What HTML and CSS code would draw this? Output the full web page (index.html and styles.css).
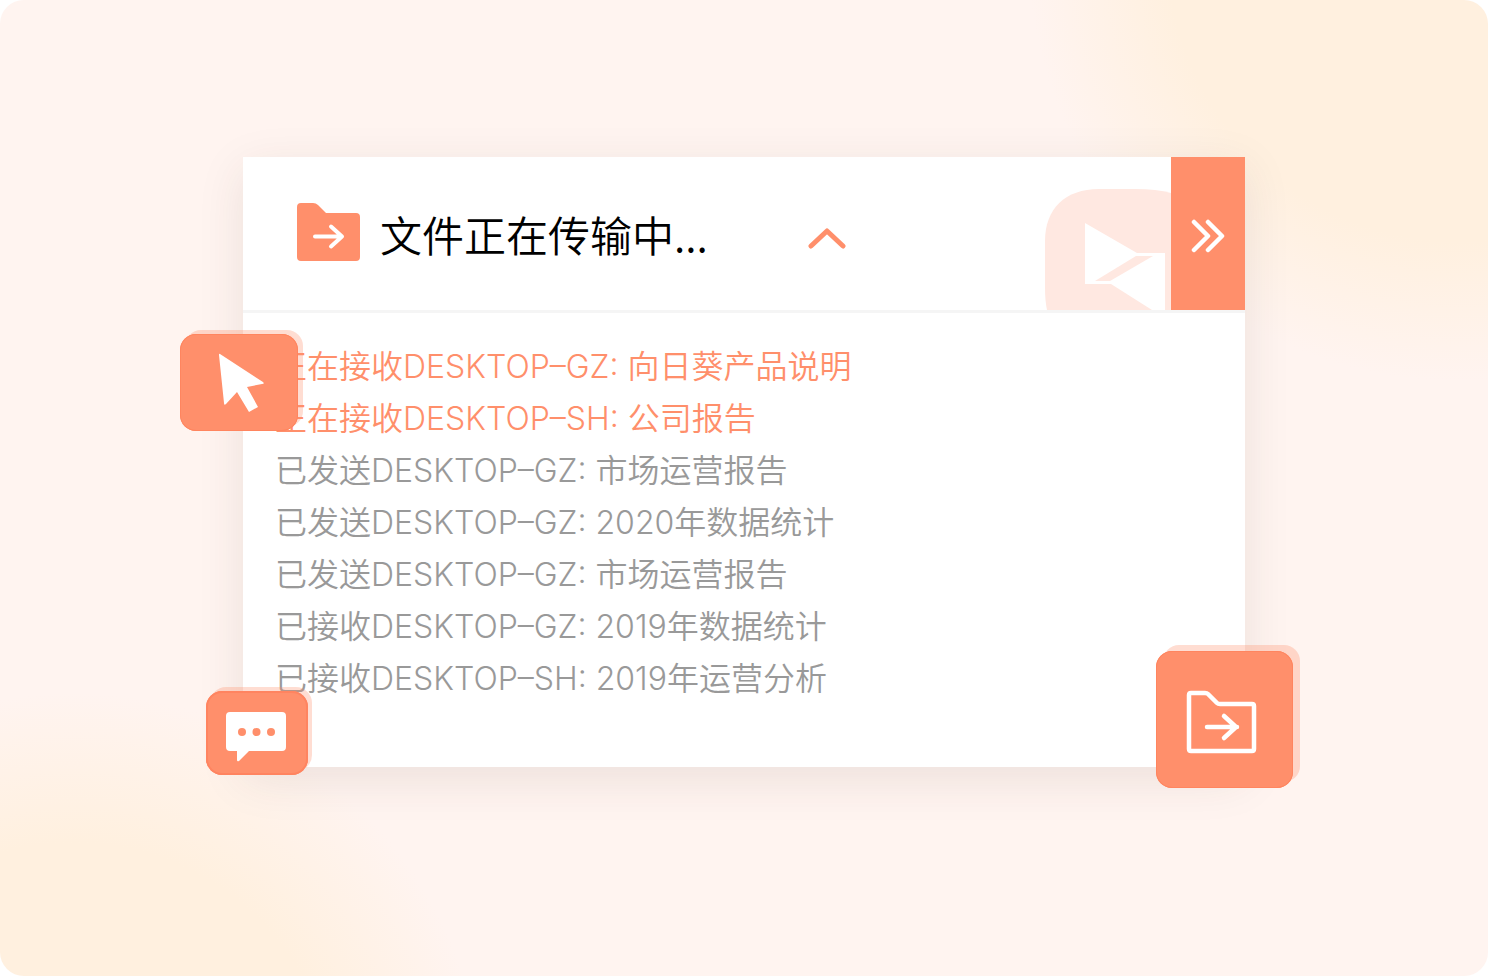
FILE: index.html
```html
<!DOCTYPE html>
<html lang="zh-CN">
<head>
    <meta charset="UTF-8">
    <meta name="viewport" content="width=device-width, initial-scale=1.0">
    <title>文件传输</title>
    <link rel="stylesheet" href="styles.css">
</head>
<body>

<main class="stage">
    <section class="card">
        <header class="card-header">
            <svg class="folder" viewBox="0 0 63 62" width="63" height="62" aria-hidden="true">
                <path d="M4 0H16Q19 0 21 2L29 10H59Q63 10 63 14V54Q63 58 59 58H4Q0 58 0 54V4Q0 0 4 0Z" fill="#ff8f6b"/>
                <path d="M18 33.500H45M34 23.500L45 33.500L34 43.500" fill="none" stroke="#fff" stroke-width="4" stroke-linecap="round" stroke-linejoin="round"/>
            </svg>
            <h1>文件正在传输中...</h1>
            <button class="collapse" type="button" aria-label="收起">
                <svg viewBox="0 0 38 22" width="38" height="22">
                    <path d="M3 19L19 4L35 19" fill="none" stroke="#ff8f6b" stroke-width="5" stroke-linecap="round" stroke-linejoin="round"/>
                </svg>
            </button>
            <svg class="logo" viewBox="0 0 126 121" width="126" height="121" aria-hidden="true">
                <path d="M2 121Q0 112 0 98V52C0 20 20 0 54 0H90Q112 0 126 4V121Z" fill="#ffe8e1"/>
                <path d="M40 34L92 64H120V121H107L66 95H40Z" fill="#fff"/>
                <path d="M50 92L91 67H108L65 92Z" fill="#ffe8e1"/>
            </svg>
            <button class="expand" type="button" aria-label="展开">
                <svg viewBox="0 0 34 34" width="34" height="34">
                    <path d="M3 3L17 17L3 31M17 3L31 17L17 31" fill="none" stroke="#fff" stroke-width="4.500" stroke-linecap="round" stroke-linejoin="round"/>
                </svg>
            </button>
        </header>

        <ul class="log">
            <li class="active">正在接收DESKTOP–GZ: 向日葵产品说明</li>
            <li class="active">正在接收DESKTOP–SH: 公司报告</li>
            <li>已发送DESKTOP–GZ: 市场运营报告</li>
            <li>已发送DESKTOP–GZ: 2020年数据统计</li>
            <li>已发送DESKTOP–GZ: 市场运营报告</li>
            <li>已接收DESKTOP–GZ: 2019年数据统计</li>
            <li>已接收DESKTOP–SH: 2019年运营分析</li>
        </ul>

        <button class="tile tile-cursor" type="button" aria-label="远程控制">
            <svg viewBox="0 0 118 97" width="118" height="97">
                <path d="M40 20L83 48Q85 50 82 50L67 53L78 73L69 78L57 58L46 70Q44 72 44 69L39 21Q39 19 40 20Z" fill="#fff"/>
            </svg>
        </button>
        <button class="tile tile-chat" type="button" aria-label="聊天">
            <svg viewBox="0 0 102 84" width="102" height="84">
                <path d="M24 21H76Q80 21 80 25V56Q80 60 76 60H43L33 70Q31 71 31 69V60H24Q20 60 20 56V25Q20 21 24 21Z" fill="#fff"/>
                <circle cx="36" cy="41" r="4" fill="#ff8f6b"/>
                <circle cx="50.500" cy="41" r="4" fill="#ff8f6b"/>
                <circle cx="65" cy="41" r="4" fill="#ff8f6b"/>
            </svg>
        </button>
        <button class="tile tile-folder" type="button" aria-label="文件">
            <svg viewBox="0 0 137 137" width="137" height="137">
                <path d="M35 42H49Q51 42 52 43L61 52Q62 53 64 53H96Q98 53 98 55V98Q98 100 96 100H35Q33 100 33 98V44Q33 42 35 42Z" fill="none" stroke="#fff" stroke-width="4.500" stroke-linejoin="round"/>
                <path d="M51 76H81M68 65L80 76L68 87" fill="none" stroke="#fff" stroke-width="4.500" stroke-linecap="round" stroke-linejoin="round"/>
            </svg>
        </button>
    </section>
</main>

</body>
</html>
```

FILE: styles.css
```css
* {
    box-sizing: border-box;
}
body {
    margin: 0;
    background: #fff;
    font-family: Inter, "Noto Sans CJK SC", sans-serif;
}
.stage {
    min-height: 100vh;
    padding: 157px 243px;
    border-radius: 24px;
    background:
        radial-gradient(circle at 98% -5%, #fff0df 0, #fff0df 290px, rgba(255, 240, 223, 0) 430px),
        radial-gradient(circle at 5% 113%, #fff0df 0, #fff0df 260px, rgba(255, 240, 223, 0) 410px),
        #fff4f0;
}
.card {
    position: relative;
    background: #fff;
    box-shadow: 0 12px 44px rgba(70, 45, 35, 0.1);
}
.card-header {
    display: flex;
    align-items: center;
    height: 156px;
    padding-left: 54px;
    border-bottom: 3px solid #f5f5f5;
}
h1 {
    margin: 0 0 0 20px;
    font-family: "Noto Sans CJK SC", sans-serif;
    font-size: 42px;
    font-weight: 350;
    line-height: 60px;
    color: #000;
}
button {
    padding: 0;
    border: none;
    cursor: pointer;
}
svg {
    display: block;
}
.collapse {
    margin-left: 100px;
    padding-top: 8px;
    background: none;
}
.logo {
    align-self: flex-end;
    margin-left: auto;
}
.expand {
    display: flex;
    align-items: center;
    align-self: stretch;
    width: 74px;
    padding-left: 20px;
    padding-top: 5px;
    background: #ff8f6b;
}
.log {
    margin: 0;
    padding: 28px 32px 62px;
    list-style: none;
    font-size: 32px;
    font-weight: 350;
    line-height: 52px;
    color: #999;
}
.log .active {
    color: #ff8f6b;
}
.tile {
    position: absolute;
    border-radius: 16px;
    background: #ff8f6b;
}
.tile-cursor {
    top: 177px;
    left: -63px;
    box-shadow: inset 0 0 0 1px #ff855f, 5px -4px 0 rgba(255, 143, 107, 0.3);
}
.tile-chat {
    bottom: -8px;
    left: -37px;
    box-shadow: inset 0 0 0 2px #ff8460, 4px -4px 0 rgba(255, 143, 107, 0.3);
}
.tile-folder {
    right: -48px;
    bottom: -21px;
    box-shadow: inset 0 0 0 1px #ff855f, 7px -6px 0 rgba(255, 143, 107, 0.3);
}
```
